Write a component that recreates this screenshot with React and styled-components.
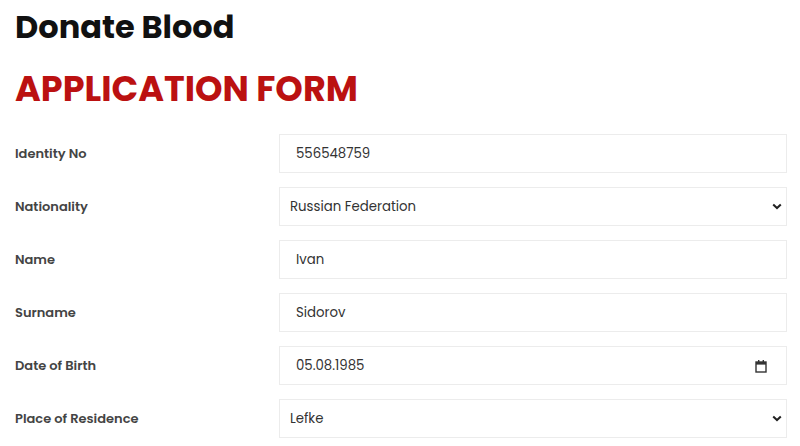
import React from 'react';
import styled, { createGlobalStyle } from 'styled-components';

const GlobalStyle = createGlobalStyle`
  body {
    margin: 0;
    background: #ffffff;
    font-family: Poppins, Inter, "Noto Sans", sans-serif;
  }
`;

const Page = styled.div`
  padding: 8px 13px 0 15px;
`;

const Title = styled.h1`
  margin: 0;
  font-size: 32px;
  font-weight: 700;
  color: #111111;
  line-height: 38px;
`;

const Subtitle = styled.h2`
  margin: 22px 0 0;
  font-size: 35px;
  font-weight: 700;
  color: #bb1111;
  line-height: 42px;
`;

const Form = styled.form`
  display: flex;
  flex-direction: column;
  gap: 14px;
  margin-top: 24px;
`;

const Row = styled.div`
  display: grid;
  grid-template-columns: 264px 1fr;
  align-items: center;
`;

const Label = styled.label`
  font-size: 13px;
  font-weight: 600;
  color: #444444;
`;

const Field = styled.div`
  display: flex;
  align-items: center;
  height: 39px;
  box-sizing: border-box;
  border: 1px solid #ececec;
  background: #ffffff;
  padding: 0 ${(p) => p.$right || '0'} 0 ${(p) => p.$left || '16px'};
`;

const Input = styled.input`
  flex: 1;
  min-width: 0;
  border: none;
  outline: none;
  background: transparent;
  padding: 0;
  font: inherit;
  font-size: 13.3px;
  color: #333333;
`;

const Select = styled.select`
  flex: 1;
  min-width: 0;
  border: none;
  outline: none;
  background: transparent;
  padding: 0;
  appearance: none;
  font: inherit;
  font-size: 13.3px;
  color: #333333;
`;

const Chevron = () => (
  <svg width="10" height="7" viewBox="0 0 10 7">
    <path d="M1.2 1.4 L5 5 L8.8 1.4" fill="none" stroke="#222" strokeWidth="2" />
  </svg>
);

const Calendar = () => (
  <svg width="12" height="14" viewBox="0 0 12 14">
    <rect x="1" y="3" width="10" height="10" fill="none" stroke="#333" strokeWidth="1.4" />
    <rect x="1" y="3" width="10" height="2.6" fill="#333" />
    <rect x="3" y="1" width="1.4" height="2.5" fill="#333" />
    <rect x="7.6" y="1" width="1.4" height="2.5" fill="#333" />
  </svg>
);

const fields = [
  { label: 'Identity No', value: '556548759' },
  { label: 'Nationality', value: 'Russian Federation', select: true },
  { label: 'Name', value: 'Ivan' },
  { label: 'Surname', value: 'Sidorov' },
  { label: 'Date of Birth', value: '05.08.1985', date: true },
  { label: 'Place of Residence', value: 'Lefke', select: true },
];

export default function App() {
  return (
    <>
      <GlobalStyle />
      <Page>
        <Title>Donate Blood</Title>
        <Subtitle>APPLICATION FORM</Subtitle>
        <Form>
          {fields.map((f) => (
            <Row key={f.label}>
              <Label>{f.label}</Label>
              {f.select ? (
                <Field $left="10px" $right="4px">
                  <Select defaultValue={f.value}>
                    <option>{f.value}</option>
                  </Select>
                  <Chevron />
                </Field>
              ) : (
                <Field $right={f.date ? '19px' : '0'}>
                  <Input defaultValue={f.value} readOnly />
                  {f.date && <Calendar />}
                </Field>
              )}
            </Row>
          ))}
        </Form>
      </Page>
    </>
  );
}
